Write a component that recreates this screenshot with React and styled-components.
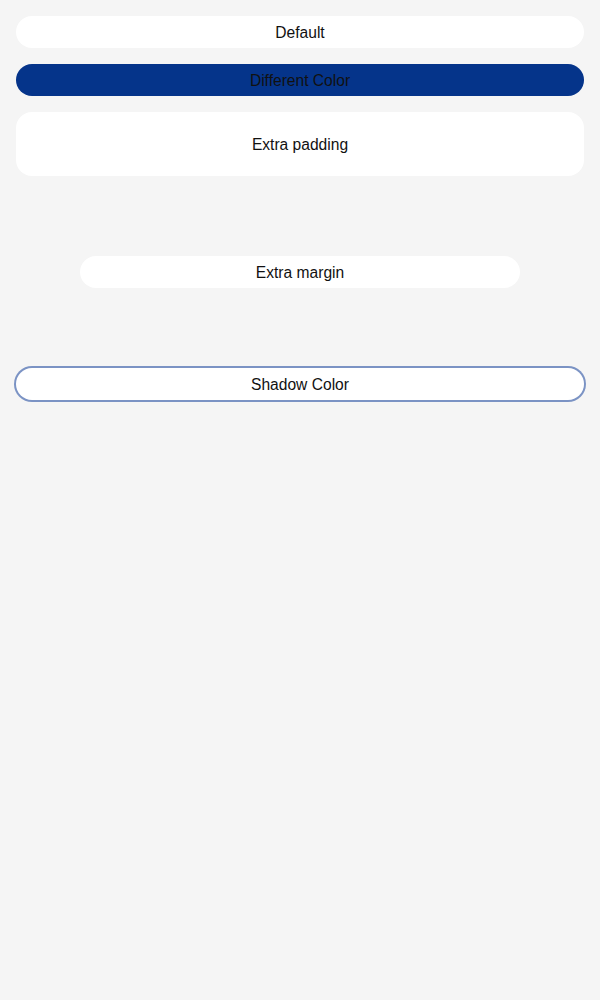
import React from "react";
import styled, { createGlobalStyle } from "styled-components";

const GlobalStyle = createGlobalStyle`
  html, body {
    margin: 0;
    padding: 0;
    background: #f5f5f5;
  }
  body {
    font-family: "Liberation Sans", Arial, sans-serif;
  }
`;

const StyledList = styled.div`
  display: flex;
  flex-direction: column;
  gap: 16px;
  padding: 16px;
  min-height: 1000px;
  box-sizing: border-box;
  background: #f5f5f5;
`;

const StyledItem = styled.div`
  display: flex;
  align-items: center;
  justify-content: center;
  box-sizing: border-box;
  height: ${props => (props.padded ? "64px" : "32px")};
  padding-top: 2px;
  margin: ${props => (props.spaced ? "64px" : "0")};
  border-radius: 16px;
  background: ${props => props.color || "#ffffff"};
  box-shadow: ${props => (props.shadow ? `0 0 0 2px ${props.shadow}` : "none")};
  color: #111111;
  font-size: 15.6px;
`;

function App() {
  return (
    <>
      <GlobalStyle />
      <StyledList>
        <StyledItem>Default</StyledItem>
        <StyledItem color="#05348a">Different Color</StyledItem>
        <StyledItem padded>Extra padding</StyledItem>
        <StyledItem spaced>Extra margin</StyledItem>
        <StyledItem shadow="#7b93c4">Shadow Color</StyledItem>
      </StyledList>
    </>
  );
}

export default App;
